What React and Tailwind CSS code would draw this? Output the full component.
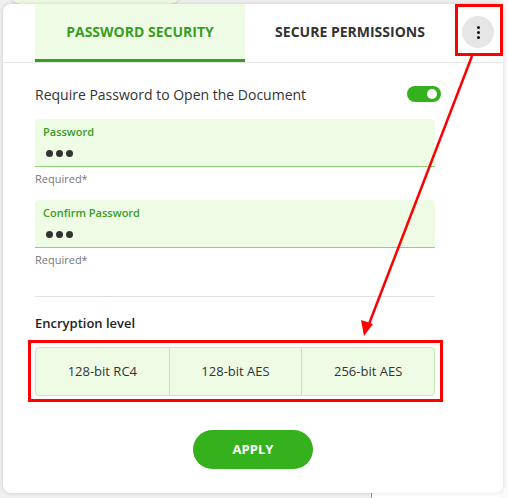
import React from 'react';

const font = { fontFamily: '"Open Sans", "Noto Sans", sans-serif' };

const PasswordField = ({ label }) => (
  <div>
    <div className="h-[48px] bg-[#eefce6] rounded-t-[4px] border-b border-[#8fd07a] pl-[8px] pt-[5px]">
      <div className="text-[11px] leading-[16px] font-semibold text-[#3a9d23]">{label}</div>
      <div className="flex gap-[3px] mt-[10px] ml-[3px]">
        <span className="w-[7px] h-[7px] rounded-full bg-[#333]" />
        <span className="w-[7px] h-[7px] rounded-full bg-[#333]" />
        <span className="w-[7px] h-[7px] rounded-full bg-[#333]" />
      </div>
    </div>
    <div className="text-[11px] leading-[16px] text-[#777] mt-[4px]">Required*</div>
  </div>
);

const levels = ['128-bit RC4', '128-bit AES', '256-bit AES'];

const App = () => {
  return (
    <div className="relative w-[508px] h-[498px] overflow-hidden bg-[#efefef]" style={font}>
      {/* page fragments behind the dialog */}
      <div className="absolute left-[10px] top-[-10px] w-[170px] h-[14px] rounded-b-[10px] bg-[#edfbe4] shadow" />
      <div className="absolute left-[371px] top-[490px] w-[137px] h-[10px] bg-white border-l border-[#999]" />
      <div className="absolute left-[500px] top-0 w-[8px] h-[498px] bg-[#fafafa]" />

      <div className="relative ml-[3px] mt-[4px] w-[500px] h-[489px] bg-white rounded-[8px] shadow-[0_0_4px_rgba(0,0,0,0.15)]">
        <div className="flex items-stretch h-[59px] pl-[32px] border-b border-[#e5e5e5]">
          <div className="w-[210px] bg-[#eefce6] border-b-[3px] border-[#3a9d23] flex items-center justify-center text-[14px] font-bold text-[#3a9d23]">
            PASSWORD SECURITY
          </div>
          <div className="w-[210px] flex items-center justify-center text-[14px] font-bold text-[#333] pb-[3px]">
            SECURE PERMISSIONS
          </div>
          <div className="flex items-center ml-[7px] pb-[2px]">
            <button className="w-[32px] h-[32px] rounded-full bg-[#e6e6e6] flex flex-col items-center justify-center gap-[2px]">
              <span className="w-[3px] h-[3px] rounded-full bg-[#111]" />
              <span className="w-[3px] h-[3px] rounded-full bg-[#111]" />
              <span className="w-[3px] h-[3px] rounded-full bg-[#111]" />
            </button>
          </div>
        </div>

        <div className="px-[32px] w-[464px]">
          <div className="flex items-center justify-between h-[20px] mt-[21px]">
            <span className="text-[14px] text-[#333]">Require Password to Open the Document</span>
            <div className="w-[34px] h-[16px] rounded-full bg-[#35b11e] flex items-center justify-end pr-[4px] mr-[-6px]">
              <span className="w-[10px] h-[10px] rounded-full bg-white" />
            </div>
          </div>

          <div className="mt-[15px]">
            <PasswordField label="Password" />
          </div>
          <div className="mt-[13px]">
            <PasswordField label="Confirm Password" />
          </div>

          <div className="border-t border-[#e2e2e2] mt-[28px]" />

          <div className="text-[13px] font-semibold text-[#222] mt-[17px] leading-[18px]">Encryption level</div>

          <div className="grid grid-cols-3 h-[49px] mt-[15px] bg-[#eefce6] border border-[#c3e9b5] rounded-[4px]">
            {levels.map((l, i) => (
              <div
                key={l}
                className={'flex items-center justify-center text-[13px] text-[#333] ' + (i > 0 ? 'border-l border-[#c3e9b5]' : '')}
              >
                {l}
              </div>
            ))}
          </div>
        </div>

        <div className="flex justify-center mt-[34px]">
          <button className="w-[120px] h-[39px] rounded-full bg-[#35b11e] text-white text-[13px] font-bold">APPLY</button>
        </div>
      </div>

      {/* annotations */}
      <svg className="absolute left-0 top-0" width="508" height="498">
        <rect x="456.5" y="5.5" width="45" height="49" fill="none" stroke="#ff0000" strokeWidth="3" />
        <rect x="29.5" y="341.5" width="412" height="59" fill="none" stroke="#ff0000" strokeWidth="3" />
        <line x1="472" y1="56" x2="369" y2="324" stroke="#ff0000" strokeWidth="2.5" />
        <polygon points="364,336 361,320 373,324" fill="#ff0000" />
      </svg>
    </div>
  );
};

export default App;
